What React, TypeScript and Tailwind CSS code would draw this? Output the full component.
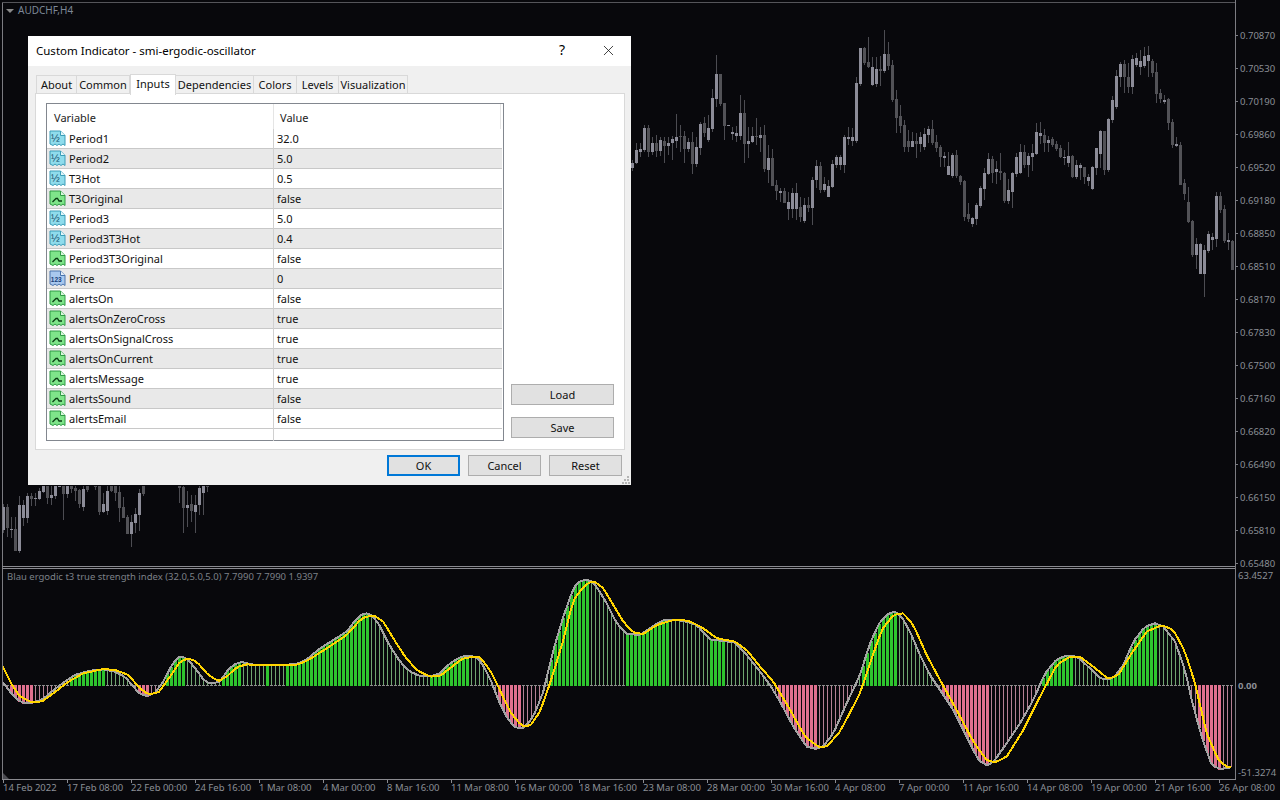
import { X } from "lucide-react";

// candles: top, bottom, wick top, wick bottom, light (y in 3x crop units, i -> x = 632 + 4i)
const upper: [number, number, number, number, number][] = [
  [430,445,420,452,1],[390,428,370,432,1],[388,395,370,410,1],[323,390,315,395,1],[325,395,315,410,0],[370,395,350,405,1],
  [370,392,345,410,0],[360,392,350,408,1],[362,378,350,428,0],[370,378,350,405,1],[358,370,348,420,1],[350,362,282,385,1],
  [348,352,316,395,0],[348,387,332,428,0],[366,387,355,395,1],[366,432,336,462,0],[382,432,350,440,1],[312,384,306,405,1],
  [310,340,292,352,0],[325,360,285,365,1],[235,326,207,335,1],[162,237,105,262,1],[162,252,162,258,0],[250,318,250,360,0],
  [315,317,315,318,1],[336,342,322,360,1],[340,348,318,365,1],[280,348,225,360,1],[280,372,240,428,0],[363,372,320,415,1],
  [348,366,322,370,1],[348,352,295,375,0],[345,354,322,395,1],[345,448,315,455,0],[415,450,375,490,1],[415,498,388,495,0],
  [495,512,480,540,0],[512,520,505,545,1],[514,548,505,550,0],[546,566,515,600,1],[520,566,505,595,1],[520,566,488,600,1],
  [562,590,530,605,0],[556,604,535,610,1],[556,564,530,575,0],[480,564,470,615,1],[438,480,420,505,1],[438,510,425,520,0],
  [492,510,470,515,1],[498,530,480,530,1],[432,500,420,505,1],[410,435,405,445,1],[410,435,405,450,1],[352,435,345,458,1],
  [350,356,322,375,1],[352,362,325,378,1],[190,362,170,370,1],[83,192,83,198,1],[83,130,82,135,0],[125,142,50,145,0],
  [142,194,110,198,1],[148,192,110,200,1],[148,152,108,198,0],[102,152,30,158,1],[102,138,66,150,0],[135,240,120,245,0],
  [237,294,210,340,0],[288,318,255,340,0],[316,382,300,395,0],[362,382,330,395,0],[363,382,335,382,1],[364,372,338,415,0],
  [352,372,335,395,1],[342,382,325,390,1],[326,345,318,370,1],[326,368,300,375,0],[366,385,345,395,0],[380,412,375,440,0],
  [408,414,395,440,1],[438,465,395,465,1],[405,468,400,475,1],[405,468,390,475,0],[468,486,465,495,0],[484,590,480,602,0],
  [582,598,548,605,0],[595,612,590,622,1],[555,598,548,615,1],[505,558,498,565,1],[460,507,445,540,1],[418,462,398,465,1],
  [418,458,408,490,0],[448,456,422,492,1],[454,460,398,480,0],[460,542,455,550,0],[510,544,478,552,1],[460,515,455,565,1],
  [412,462,398,470,1],[396,458,372,462,1],[396,435,375,445,0],[408,435,398,472,1],[400,410,372,452,1],[337,402,310,405,1],
  [340,348,305,372,1],[346,368,328,395,0],[360,368,348,395,1],[356,375,350,380,0],[372,388,362,392,0],[384,412,375,415,0],
  [410,414,390,435,1],[408,430,365,440,1],[408,470,405,475,0],[435,472,420,478,1],[434,444,430,480,1],[442,472,440,492,0],
  [472,482,462,498,1],[442,506,438,510,1],[385,444,385,465,1],[332,402,330,445,1],[334,450,332,465,0],[297,450,295,455,1],
  [240,300,228,310,1],[168,262,150,268,1],[132,172,125,200,1],[132,172,120,220,0],[170,200,130,220,0],[118,202,105,222,1],
  [115,136,100,140,1],[122,140,90,165,1],[108,138,82,145,1],[105,122,78,170,1],[122,158,118,170,0],[155,222,130,250,0],
  [220,238,208,250,0],[240,246,225,252,1],[238,308,235,330,0],[306,375,298,385,0],[373,378,352,380,1],[375,494,366,496,0],
  [490,522,478,540,0],[546,606,500,608,0],[603,706,600,712,0],[672,705,655,748,1],[672,762,670,762,1],[690,762,675,830,1],
  [642,692,632,700,1],[652,660,640,690,1],[528,656,515,680,1],[528,570,515,580,0],[568,662,555,670,0],[660,665,640,690,1],
  [664,750,660,750,0],
];

// strip under the dialog: x, top, bottom, wick top, wick bottom, light (real x, y in 3x crop units from 480)
const lower: [number, number, number, number, number, number][] = [
  [3,82,150,72,160,1],[7,82,143,72,172,0],[11,147,150,112,175,1],[15,147,212,110,212,0],[19,75,212,48,218,1],[23,75,113,60,137,1],
  [27,48,113,38,130,1],[31,48,56,38,78,0],[35,54,56,40,78,1],[39,33,57,25,60,1],[43,18,36,18,38,1],[47,18,54,18,72,0],
  [51,45,53,18,75,1],[55,18,47,18,58,1],[59,18,20,18,22,1],[63,18,42,18,120,0],[67,18,42,18,55,1],[71,18,27,18,40,0],
  [75,24,32,18,62,0],[79,30,72,28,85,0],[83,28,80,18,92,1],[87,18,30,18,35,0],[95,18,18,18,30,0],[99,18,95,18,105,0],
  [103,72,95,40,100,1],[107,33,92,18,105,1],[111,18,32,18,35,0],[115,18,38,18,62,0],[119,37,84,18,125,0],[123,82,113,52,115,0],
  [127,110,162,105,162,0],[131,126,162,105,200,1],[135,102,128,85,160,1],[139,38,104,28,152,1],[143,18,42,18,48,0],[179,18,24,18,70,0],
  [183,22,83,18,160,0],[187,75,84,32,140,1],[191,72,94,45,125,0],[195,75,95,45,158,1],[199,24,75,18,105,1],[203,18,38,18,105,1],
  [207,18,18,18,36,0],
];

// curve points in 3x crop units, one list per crop: [x offset, points]
const grayCurve: [number, number[]][] = [
  [0, [10,368,30,395,50,418,70,428,95,428,125,420,155,395,190,368,225,345,270,332,310,328,345,335,375,350,400,380,420,402,440,408,465,398,490,365,510,325,530,295,545,288,565,300,590,330,615,365,635,370,660,365,680,335,700,315,725,305,750,313,800,316,850,315,890,312,920,298,960,265,1000,240,1040,215,1070,175,1095,158,1115,165,1135,190,1165,250,1200,305,1230,335,1260,348]],
  [430, [0,350,30,340,60,310,90,292,120,285,150,300,180,355,205,420,235,480,260,505,280,505,310,470,340,395,370,270,400,170,430,85,450,62,480,60,500,80,530,130,560,190,590,222,630,225,660,205,695,182,730,178,770,185,800,195,840,238,880,243,915,248,950,285,990,335,1020,375,1050,425,1090,500,1130,560,1160,567,1180,558,1210,520,1250,430]],
  [860, [0,345,30,250,60,185,85,160,105,155,125,170,150,215,180,285,210,345,240,390,280,450,320,530,355,600,380,616,400,606,440,550,480,490,520,420,555,340,590,298,625,285,655,292,690,325,725,358,760,355,790,315,820,245,855,200,885,190,910,200,945,245,975,330,995,420,1025,530,1055,615,1080,627,1115,622]],
];
const yellowCurve: [number, number[]][] = [
  [0, [10,320,30,365,60,410,95,427,125,425,160,400,205,365,250,340,310,327,345,330,385,345,420,385,445,403,475,398,510,350,540,305,565,295,590,305,625,345,655,363,680,350,710,322,740,313,800,316,890,315,925,300,980,265,1040,225,1085,175,1120,165,1150,185,1180,235,1215,290,1250,330]],
  [430, [0,350,30,348,60,325,95,297,130,290,150,292,180,330,205,380,240,455,275,498,300,498,330,455,365,355,400,240,430,120,465,75,490,62,520,85,550,135,580,185,610,218,640,222,680,195,730,180,775,182,820,205,860,235,915,245,950,270,990,320,1030,365,1075,440,1125,530,1165,560,1190,560,1230,515]],
  [860, [0,400,30,310,65,210,100,165,130,160,160,195,200,285,240,360,290,450,340,545,380,600,405,607,440,590,490,510,540,410,590,315,630,290,660,290,700,320,745,357,775,345,815,280,860,215,905,195,940,210,975,275,1005,370,1040,520,1075,600,1100,620,1115,620]],
];

function toPoints(curve: [number, number[]][]) {
  const out: [number, number][] = [];
  for (const [off, list] of curve) {
    for (let i = 0; i < list.length; i += 2) out.push([off + list[i] / 3, 560 + list[i + 1] / 3]);
  }
  return out;
}

function sample(pts: [number, number][], x: number) {
  if (x <= pts[0][0]) return pts[0][1];
  for (let i = 1; i < pts.length; i++) {
    if (x <= pts[i][0]) {
      const [x0, y0] = pts[i - 1];
      const [x1, y1] = pts[i];
      return y0 + ((y1 - y0) * (x - x0)) / (x1 - x0);
    }
  }
  return pts[pts.length - 1][1];
}

const thickRanges = [
  [10, 32], [70, 103], [138, 150], [165, 185], [223, 242], [265, 270], [285, 370], [430, 470], [498, 522], [548, 588],
  [627, 668], [710, 725], [777, 818], [860, 897], [943, 990], [1042, 1073], [1110, 1157], [1197, 1222],
];

const ZERO = 685;

function Oscillator() {
  const gray = toPoints(grayCurve);
  const yellow = toPoints(yellowCurve);
  const xs = Array.from({ length: 308 }, (_, i) => 3 + 4 * i);
  const line = (pts: [number, number][]) => xs.map((x) => `${x},${sample(pts, x).toFixed(1)}`).join(" ");
  return (
    <svg className="absolute left-0 top-0" width="1280" height="800" shapeRendering="crispEdges">
      {xs.map((x) => {
        const y = Math.round(sample(gray, x));
        const up = y < ZERO;
        const thick = thickRanges.some(([a, b]) => x >= a && x <= b);
        const top = Math.min(y, ZERO);
        const h = Math.abs(y - ZERO);
        if (thick) {
          return <rect key={x} x={x - 1} y={top} width="3" height={h + 1} fill={up ? "#2ec42e" : "#e0708f"} />;
        }
        return (
          <g key={x}>
            <rect x={x} y={top} width="1" height={h} fill={up ? "#6fa56f" : "#b58094"} />
            <rect x={x - 1} y={ZERO} width="3" height="1" fill="#8c8c8c" />
          </g>
        );
      })}
      <g fill="none" strokeLinejoin="round">
        <polyline points={line(gray)} stroke="#a3a3a3" strokeWidth="2" />
        <polyline points={line(yellow)} stroke="#ffd400" strokeWidth="2" />
      </g>
    </svg>
  );
}

function Candles() {
  const bar = (key: string, x: number, t: number, b: number, wt: number, wb: number, light: number) => (
    <g key={key}>
      <rect x={x} y={wt} width="1" height={Math.max(wb - wt, 1)} fill="#4c4c52" />
      <rect x={x - 1} y={t} width="3" height={Math.max(b - t, 1)} fill={light ? "#8c8c98" : "#525257"} />
    </g>
  );
  return (
    <svg className="absolute left-0 top-0" width="1234" height="566" shapeRendering="crispEdges">
      {upper.map(([t, b, wt, wb, l], i) =>
        bar(`u${i}`, 632 + 4 * i, 20 + t / 3, 20 + b / 3, 20 + wt / 3, 20 + wb / 3, l),
      )}
      {lower.map(([x, t, b, wt, wb, l]) =>
        bar(`l${x}`, x, 480 + t / 3, 480 + b / 3, 480 + wt / 3, 480 + wb / 3, l),
      )}
    </svg>
  );
}

const prices = [
  "0.70870", "0.70530", "0.70190", "0.69860", "0.69520", "0.69180", "0.68850", "0.68510", "0.68170",
  "0.67830", "0.67500", "0.67160", "0.66820", "0.66490", "0.66150", "0.65810", "0.65480",
];

const dates = [
  "14 Feb 2022", "17 Feb 08:00", "22 Feb 00:00", "24 Feb 16:00", "1 Mar 08:00", "4 Mar 00:00", "8 Mar 16:00",
  "11 Mar 08:00", "16 Mar 00:00", "18 Mar 16:00", "23 Mar 08:00", "28 Mar 00:00", "30 Mar 16:00", "4 Apr 08:00",
  "7 Apr 00:00", "11 Apr 16:00", "14 Apr 08:00", "19 Apr 00:00", "21 Apr 16:00", "26 Apr 08:00",
];

function ChartFrame() {
  return (
    <>
      <div className="absolute left-[2px] top-[2px] h-[777px] w-px bg-[#7c7c82]" />
      <div className="absolute left-[2px] top-[2px] h-px w-[1233px] bg-[#55555a]" />
      <div className="absolute left-[1235px] top-0 h-[780px] w-px bg-[#7c7c82]" />
      <div className="absolute left-[2px] top-[566px] h-px w-[1233px] bg-[#8a8a90]" />
      <div className="absolute left-[2px] top-[568px] h-px w-[1233px] bg-[#8a8a90]" />
      <div className="absolute left-[2px] top-[779px] h-px w-[1234px] bg-[#8a8a90]" />
      <div className="absolute left-[6px] top-[9px] h-0 w-0 border-x-[4px] border-t-[4px] border-x-transparent border-t-[#8a8a8a]" />
      <span className="absolute left-[18px] top-[4px] text-[10px] leading-[12px] text-[#7d8796]">AUDCHF,H4</span>
      <span className="absolute left-[7px] top-[571px] text-[9.5px] leading-[12px] whitespace-nowrap text-[#7d8188]">
        Blau ergodic t3 true strength index (32.0,5.0,5.0) 7.7990 7.7990 1.9397
      </span>
      {prices.map((p, i) => (
        <span
          key={p}
          className="absolute left-[1240px] text-[9.5px] leading-[12px] text-[#8b8f96]"
          style={{ top: 30 + i * 33 }}
        >
          {p}
        </span>
      ))}
      {prices.map((p, i) => (
        <div key={p} className="absolute left-[1235px] h-px w-[3px] bg-[#7c7c82]" style={{ top: 35 + i * 33 }} />
      ))}
      <span className="absolute left-[1238px] top-[570px] text-[9.5px] leading-[12px] text-[#8b8f96]">63.4527</span>
      <span className="absolute left-[1238px] top-[680px] text-[9.5px] font-bold leading-[12px] text-[#8b8f96]">0.00</span>
      <span className="absolute left-[1238px] top-[767px] text-[9.5px] leading-[12px] text-[#8b8f96]">-51.3274</span>
      {dates.map((d, i) => (
        <span
          key={d}
          className="absolute top-[782px] text-[9.5px] leading-[12px] whitespace-nowrap text-[#8b8f96]"
          style={{ left: 3 + i * 64 }}
        >
          {d}
        </span>
      ))}
      {dates.map((d, i) => (
        <div key={d} className="absolute top-[780px] h-[3px] w-px bg-[#8a8a90]" style={{ left: 3 + i * 64 }} />
      ))}
      <svg className="absolute left-[3px] top-[773px]" width="6" height="6">
        <polygon points="0,0 6,6 0,6" fill="#4a4a50" />
      </svg>
    </>
  );
}

const torn = "M1 1h10.500l4.500 4.500v10l-2-1.500-2 1.500-2-1.500-2 1.500-2-1.500-2 1.500-3-1.500z";

function FractionIcon() {
  return (
    <svg width="17" height="17" viewBox="0 0 17 17" className="shrink-0">
      <path d={torn} fill="#8fdcec" stroke="#3c9db8" />
      <path d="M11.500 1v4.500h4.500" fill="#e3f7fb" stroke="#3c9db8" />
      <text x="2" y="11.500" fontSize="10.500" fontFamily="'Liberation Sans', sans-serif" fill="#17506e">½</text>
    </svg>
  );
}

function BoolIcon() {
  return (
    <svg width="17" height="17" viewBox="0 0 17 17" className="shrink-0">
      <path d={torn} fill="#7fe58a" stroke="#2f9a45" />
      <path d="M11.500 1v4.500h4.500" fill="#d9f9dd" stroke="#2f9a45" />
      <path d="M3.500 12l3.500-3.500h1.500l1.500 2.500h3" fill="none" stroke="#0b3d14" strokeWidth="1.300" />
    </svg>
  );
}

function NumberIcon() {
  return (
    <svg width="17" height="17" viewBox="0 0 17 17" className="shrink-0">
      <path d={torn} fill="#a9c8ee" stroke="#4a74ad" />
      <path d="M11.500 1v4.500h4.500" fill="#e4eefa" stroke="#4a74ad" />
      <text x="1.800" y="11.500" fontSize="6.500" fontWeight="700" fontFamily="'Liberation Sans', sans-serif" fill="#173f7a">123</text>
    </svg>
  );
}

const rows: { name: string; value: string; icon: "frac" | "bool" | "num" }[] = [
  { name: "Period1", value: "32.0", icon: "frac" },
  { name: "Period2", value: "5.0", icon: "frac" },
  { name: "T3Hot", value: "0.5", icon: "frac" },
  { name: "T3Original", value: "false", icon: "bool" },
  { name: "Period3", value: "5.0", icon: "frac" },
  { name: "Period3T3Hot", value: "0.4", icon: "frac" },
  { name: "Period3T3Original", value: "false", icon: "bool" },
  { name: "Price", value: "0", icon: "num" },
  { name: "alertsOn", value: "false", icon: "bool" },
  { name: "alertsOnZeroCross", value: "true", icon: "bool" },
  { name: "alertsOnSignalCross", value: "true", icon: "bool" },
  { name: "alertsOnCurrent", value: "true", icon: "bool" },
  { name: "alertsMessage", value: "true", icon: "bool" },
  { name: "alertsSound", value: "false", icon: "bool" },
  { name: "alertsEmail", value: "false", icon: "bool" },
];

const tabs = [
  { label: "About", w: "w-[41px]" },
  { label: "Common", w: "w-[53px]" },
  { label: "Inputs", w: "w-[46px]" },
  { label: "Dependencies", w: "w-[78px]" },
  { label: "Colors", w: "w-[43px]" },
  { label: "Levels", w: "w-[42px]" },
  { label: "Visualization", w: "w-[69px]" },
];

function Dialog() {
  return (
    <div className="absolute left-[28px] top-[36px] h-[449px] w-[603px] bg-[#f0f0f0] [font-family:'Liberation_Sans',Arial,sans-serif] text-[11px] text-[#111]">
      <div className="relative h-[30px] bg-white">
        <span className="absolute left-[8px] top-[6px] whitespace-nowrap [font-family:'Open_Sans',sans-serif] text-[11.5px] leading-[18px] text-black">
          Custom Indicator - smi-ergodic-oscillator
        </span>
        <span className="absolute left-[531px] top-[6px] text-[14px] leading-[16px] text-black">?</span>
        <X className="absolute left-[572px] top-[6px] h-[17px] w-[17px] text-[#111]" strokeWidth={1.1} />
      </div>

      <div className="absolute left-[8px] top-[39px] flex h-[19px] items-end">
        {tabs.map((t) =>
          t.label === "Inputs" ? (
            <div
              key={t.label}
              className={`relative z-10 -mb-px flex h-[21px] ${t.w} items-center justify-center border border-b-0 border-[#d9d9d9] bg-white pb-[2px]`}
            >
              {t.label}
            </div>
          ) : (
            <div
              key={t.label}
              className={`flex h-[19px] ${t.w} items-center justify-center border border-b-0 border-l-0 first:border-l border-[#d9d9d9] bg-[#f0f0f0]`}
            >
              {t.label}
            </div>
          ),
        )}
      </div>

      <div className="absolute left-[7px] top-[57px] h-[357px] w-[590px] border border-[#d9d9d9] bg-white">
        <div className="absolute left-[10px] top-[9px] h-[338px] w-[458px] border border-[#82878f] bg-white">
          <div className="relative h-[25px] text-[#222]">
            <span className="absolute left-[7px] top-[7px] leading-[14px]">Variable</span>
            <span className="absolute left-[233px] top-[7px] leading-[14px]">Value</span>
            <div className="absolute left-[226px] top-0 h-[25px] w-px bg-[#e5e5e5]" />
            <div className="absolute left-[453px] top-0 h-[25px] w-px bg-[#e5e5e5]" />
          </div>
          {rows.map((r, i) => (
            <div
              key={r.name}
              className={`flex h-[20px] w-[455px] items-center border-b border-[#c8c8c8] ${i % 2 ? "bg-[#e9e9e9]" : "bg-white"}`}
            >
              <div className="flex w-[226px] items-center gap-[3px] pl-[2px]">
                {r.icon === "frac" && <FractionIcon />}
                {r.icon === "bool" && <BoolIcon />}
                {r.icon === "num" && <NumberIcon />}
                <span className="pt-px leading-[14px]">{r.name}</span>
              </div>
              <div className="h-full w-px bg-[#c8c8c8]" />
              <span className="pl-[3px] pt-px leading-[14px]">{r.value}</span>
            </div>
          ))}
          <div className="absolute left-[226px] top-[25px] h-[312px] w-px bg-[#d0d0d0]" />
        </div>

        <button className="absolute left-[475px] top-[290px] h-[21px] w-[103px] border border-[#adadad] bg-[#e1e1e1] text-center leading-[18px]">
          Load
        </button>
        <button className="absolute left-[475px] top-[323px] h-[21px] w-[103px] border border-[#adadad] bg-[#e1e1e1] text-center leading-[18px]">
          Save
        </button>
      </div>

      <button className="absolute left-[359px] top-[419px] h-[21px] w-[73px] border-2 border-[#0078d7] bg-[#e1e1e1] text-center leading-[17px]">
        OK
      </button>
      <button className="absolute left-[440px] top-[419px] h-[21px] w-[73px] border border-[#adadad] bg-[#e1e1e1] text-center leading-[19px]">
        Cancel
      </button>
      <button className="absolute left-[521px] top-[419px] h-[21px] w-[73px] border border-[#adadad] bg-[#e1e1e1] text-center leading-[19px]">
        Reset
      </button>

      <svg className="absolute left-[594px] top-[440px]" width="8" height="8" shapeRendering="crispEdges">
        <g fill="#b5b5b5">
          <rect x="5" y="0" width="2" height="2" />
          <rect x="2" y="3" width="2" height="2" />
          <rect x="5" y="3" width="2" height="2" />
          <rect x="0" y="6" width="2" height="2" />
          <rect x="3" y="6" width="2" height="2" />
          <rect x="6" y="6" width="2" height="2" />
        </g>
      </svg>
    </div>
  );
}

export default function App() {
  return (
    <div className="relative h-[800px] w-[1280px] overflow-hidden bg-[#08080c] [font-family:'Liberation_Sans',Arial,sans-serif]">
      <Candles />
      <Oscillator />
      <ChartFrame />
      <Dialog />
    </div>
  );
}
